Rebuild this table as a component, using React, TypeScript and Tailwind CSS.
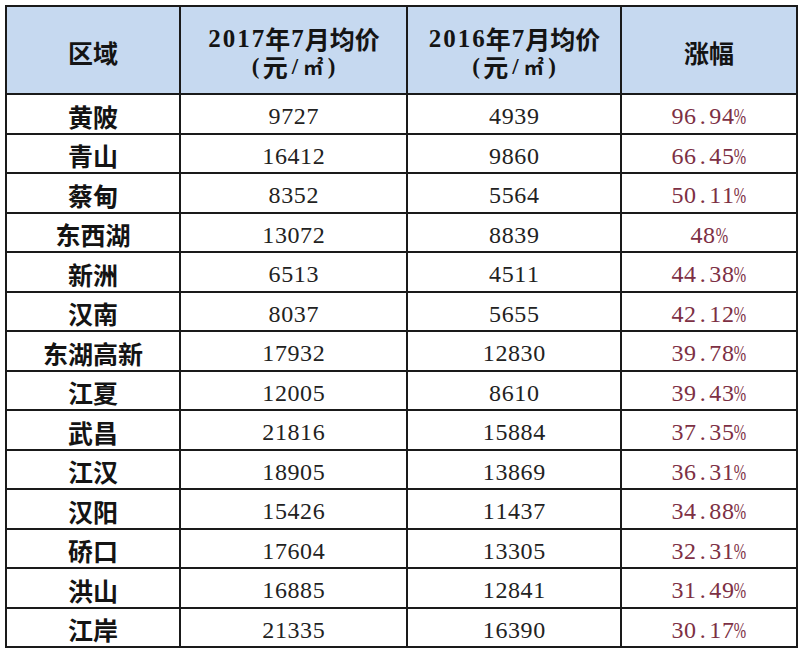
import React from "react";

const rows: [string, string, string, string][] = [
  ["黄陂", "9727", "4939", "96.94%"],
  ["青山", "16412", "9860", "66.45%"],
  ["蔡甸", "8352", "5564", "50.11%"],
  ["东西湖", "13072", "8839", "48%"],
  ["新洲", "6513", "4511", "44.38%"],
  ["汉南", "8037", "5655", "42.12%"],
  ["东湖高新", "17932", "12830", "39.78%"],
  ["江夏", "12005", "8610", "39.43%"],
  ["武昌", "21816", "15884", "37.35%"],
  ["江汉", "18905", "13869", "36.31%"],
  ["汉阳", "15426", "11437", "34.88%"],
  ["硚口", "17604", "13305", "32.31%"],
  ["洪山", "16885", "12841", "31.49%"],
  ["江岸", "21335", "16390", "30.17%"],
];

const cjk = "font-['Noto_Sans_CJK_SC',sans-serif]";
const serif = "font-['Liberation_Serif','Noto_Sans_CJK_SC',serif]";

function Cells({ text, cls }: { text: string; cls: string }) {
  return (
    <span className="inline-flex">
      {text.split("").map((ch, i) =>
        ch === "%" ? (
          <span key={i} className={`${cls} inline-flex justify-center`}>
            <span className="inline-block scale-x-[0.62]">%</span>
          </span>
        ) : (
          <span key={i} className={`${cls} inline-flex justify-center`}>
            {ch}
          </span>
        )
      )}
    </span>
  );
}

const headDigit = `${serif} font-bold text-[25px] leading-none w-[14.5px]`;
const headParen = `${serif} font-bold text-[23px] leading-none w-[14.5px]`;
const headCjk = `${cjk} font-bold text-[25px] leading-none`;

function HeadLine({ year }: { year: string }) {
  return (
    <div className="flex flex-col items-center text-[#141414]">
      <div className="flex items-center h-[28px]">
        <Cells text={year} cls={headDigit} />
        <span className={headCjk}>年</span>
        <Cells text="7" cls={headDigit} />
        <span className={headCjk}>月均价</span>
      </div>
      <div className="flex items-center h-[28px]">
        <Cells text="(" cls={headParen} />
        <span className={headCjk}>元</span>
        <Cells text="/" cls={headParen} />
        <span className={`${cjk} font-bold text-[20px] leading-none w-[22px] inline-flex justify-center`}>㎡</span>
        <Cells text=")" cls={headParen} />
      </div>
    </div>
  );
}

const bodyDigit = `${serif} text-[24px] leading-none w-[12.6px]`;

export default function App() {
  const cell = "flex items-center justify-center border-b-2 border-[#1a1a1a] h-[39.5px] pt-[5px]";
  const head = "h-[88px] bg-[#c6d9f0] border-b-2 border-[#1a1a1a] flex items-center justify-center pt-[5px]";
  return (
    <div className="w-[800px] h-[653px] bg-white pl-[5px] pt-[5px]">
      <div className="w-[793px] border-l-2 border-t-2 border-r-2 border-[#1a1a1a] grid grid-cols-[174px_227px_214px_174px]">
        <div className={`${head} border-r-2`}>
          <span className={`${cjk} font-bold text-[25px] text-[#141414]`}>区域</span>
        </div>
        <div className={`${head} border-r-2`}>
          <HeadLine year="2017" />
        </div>
        <div className={`${head} border-r-2`}>
          <HeadLine year="2016" />
        </div>
        <div className={head}>
          <span className={`${cjk} font-bold text-[25px] text-[#141414]`}>涨幅</span>
        </div>
        {rows.map((r) => (
          <React.Fragment key={r[0]}>
            <div className={`${cell} border-r-2`}>
              <span className={`${cjk} font-bold text-[25px] leading-none text-[#141414]`}>{r[0]}</span>
            </div>
            <div className={`${cell} border-r-2 text-[#222]`}>
              <Cells text={r[1]} cls={bodyDigit} />
            </div>
            <div className={`${cell} border-r-2 text-[#222]`}>
              <Cells text={r[2]} cls={bodyDigit} />
            </div>
            <div className={`${cell} text-[#7d3044]`}>
              <Cells text={r[3]} cls={bodyDigit} />
            </div>
          </React.Fragment>
        ))}
      </div>
    </div>
  );
}
